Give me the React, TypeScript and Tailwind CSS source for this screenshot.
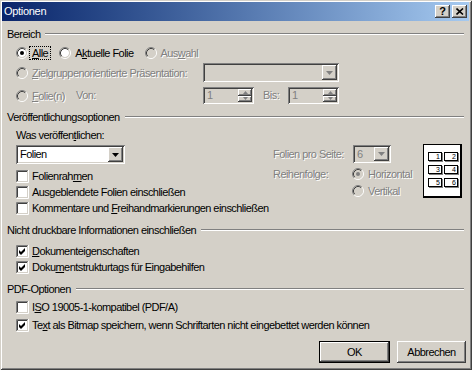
import React from "react";

const sunken =
  "shadow-[inset_1px_1px_0_#808080,inset_-1px_-1px_0_#ffffff,inset_2px_2px_0_#404040,inset_-2px_-2px_0_#d4d0c8]";
const raised =
  "shadow-[inset_-1px_-1px_0_#404040,inset_1px_1px_0_#ffffff,inset_-2px_-2px_0_#808080,inset_2px_2px_0_#d4d0c8]";
const dis = "text-[#808080] [text-shadow:1px_1px_0_#ffffff]";

function Radio({ checked, disabled }: { checked?: boolean; disabled?: boolean }) {
  return (
    <svg width="12" height="12" viewBox="0 0 12 12" className="shrink-0">
      <circle cx="6" cy="6" r="4" fill={disabled ? "#d4d0c8" : "#ffffff"} />
      <path d="M2.11 9.89 A5.5 5.5 0 0 1 9.89 2.11" stroke="#808080" fill="none" />
      <path d="M9.89 2.11 A5.5 5.5 0 0 1 2.11 9.89" stroke="#ffffff" fill="none" />
      <path d="M2.82 9.18 A4.5 4.5 0 0 1 9.18 2.82" stroke="#404040" fill="none" />
      <path d="M9.18 2.82 A4.5 4.5 0 0 1 2.82 9.18" stroke="#d4d0c8" fill="none" />
      {checked && <circle cx="6" cy="6" r="2" fill={disabled ? "#808080" : "#000000"} />}
    </svg>
  );
}

function Check({ checked }: { checked?: boolean }) {
  return (
    <svg width="13" height="13" viewBox="0 0 13 13" className="shrink-0">
      <rect x="2" y="2" width="9" height="9" fill="#ffffff" />
      <path d="M0.5 12 V0.5 H12" stroke="#808080" fill="none" />
      <path d="M0.5 12.5 H12.5 V0" stroke="#ffffff" fill="none" />
      <path d="M1.5 11 V1.5 H11" stroke="#404040" fill="none" />
      <path d="M1.5 11.5 H11.5 V1" stroke="#d4d0c8" fill="none" />
      {checked && <path d="M3 5 l2 2 l4 -4 v3 l-4 4 l-2 -2 z" fill="#000000" />}
    </svg>
  );
}

function RadioItem({
  checked,
  disabled,
  focus,
  children,
}: {
  checked?: boolean;
  disabled?: boolean;
  focus?: boolean;
  children: React.ReactNode;
}) {
  return (
    <div className="flex items-center h-[14px]">
      <Radio checked={checked} disabled={disabled} />
      <span
        className={`ml-[1px] px-[2px] border border-dotted leading-[12px] whitespace-nowrap ${
          focus ? "border-black" : "border-transparent"
        } ${disabled ? dis : ""}`}
      >
        {children}
      </span>
    </div>
  );
}

function CheckItem({ checked, children }: { checked?: boolean; children: React.ReactNode }) {
  return (
    <div className="flex items-center h-[16px] pl-[14px]">
      <Check checked={checked} />
      <span className="ml-[3px] whitespace-nowrap">{children}</span>
    </div>
  );
}

function Section({ title }: { title: string }) {
  return (
    <div className="flex items-center h-[14px] pl-[5px] pr-[5px]">
      <span className="whitespace-nowrap">{title}</span>
      <div className="flex-1 ml-[5px] h-[2px] border-t border-t-[#808080] border-b border-b-white" />
    </div>
  );
}

function Arrow({ disabled, small }: { disabled?: boolean; small?: boolean }) {
  return small ? (
    <svg width="5" height="3" viewBox="0 0 5 3">
      <path d="M0 0 H5 L2.5 3 Z" fill={disabled ? "#808080" : "#000"} />
    </svg>
  ) : (
    <svg width="7" height="4" viewBox="0 0 7 4">
      <path d="M0 0 H7 L3.5 4 Z" fill={disabled ? "#808080" : "#000"} />
    </svg>
  );
}

function Combo({
  className,
  value,
  disabled,
}: {
  className: string;
  value?: string;
  disabled?: boolean;
}) {
  return (
    <div className={`flex p-[2px] ${sunken} ${className}`}>
      <div
        className={`flex-1 flex items-center pl-[2px] ${
          disabled ? "bg-[#d4d0c8] text-[#808080]" : "bg-white text-black"
        }`}
      >
        {value}
      </div>
      <div className={`w-[15px] flex items-center justify-center bg-[#d4d0c8] ${raised}`}>
        <Arrow disabled={disabled} />
      </div>
    </div>
  );
}

function Spin({ className }: { className: string }) {
  return (
    <div className={`flex p-[2px] ${sunken} ${className}`}>
      <div className="flex-1 flex items-center pl-[2px] bg-[#d4d0c8] text-[#808080]">1</div>
      <div className="w-[14px] flex flex-col">
        <div className={`flex-1 flex items-center justify-center ${raised}`}>
          <svg width="5" height="3" viewBox="0 0 5 3">
            <path d="M0 3 H5 L2.5 0 Z" fill="#808080" />
          </svg>
        </div>
        <div className={`flex-1 flex items-center justify-center ${raised}`}>
          <Arrow disabled small />
        </div>
      </div>
    </div>
  );
}

function Cell({ n }: { n: number }) {
  return (
    <div className="w-[14px] h-[9px] border border-black bg-white shadow-[1px_1px_0_#808080] flex items-center justify-end pr-[1px] text-[7px] leading-none">
      {n}
    </div>
  );
}

export default function App() {
  return (
    <div className="w-[472px] h-[370px] bg-[#d4d0c8] flex flex-col pl-[2px] pt-[2px] pr-[3px] pb-[3px] shadow-[inset_1px_1px_0_#d4d0c8,inset_-1px_-1px_0_#404040,inset_2px_2px_0_#ffffff,inset_-2px_-2px_0_#808080] font-['Liberation_Sans',Arial,sans-serif] text-[11px] tracking-[-0.55px] text-black leading-[13px]">
      {/* Title bar */}
      <div className="h-[19px] flex items-center bg-gradient-to-r from-[#0a246a] to-[#a6caf0] pl-[2px] pr-[2px]">
        <span className="text-white text-[11px] tracking-[-0.3px] flex-1">Optionen</span>
        <div className={`w-[15px] h-[13px] flex items-center justify-center bg-[#d4d0c8] ${raised} font-bold text-[11px] leading-none tracking-normal`}>
          ?
        </div>
        <div className={`ml-[2px] w-[15px] h-[13px] flex items-center justify-center bg-[#d4d0c8] ${raised}`}>
          <svg width="8" height="7" viewBox="0 0 8 7">
            <path d="M0.5 0.5 L7 6.5 M7 0.5 L0.5 6.5" stroke="#000" strokeWidth="1.6" />
          </svg>
        </div>
      </div>

      {/* Bereich */}
      <div className="mt-[6px]">
        <Section title="Bereich" />
      </div>
      <div className="mt-[5px] h-[14px] pl-[14px] flex items-center gap-[8px]">
        <RadioItem checked focus>
          <u>A</u>lle
        </RadioItem>
        <RadioItem>
          A<u>k</u>tuelle Folie
        </RadioItem>
        <RadioItem disabled>
          Aus<u>w</u>ahl
        </RadioItem>
      </div>
      <div className="mt-[3px] h-[19px] pl-[14px] flex items-center">
        <div className="w-[187px]">
          <RadioItem disabled>
            <u>Z</u>ielgruppenorientierte Präsentation:
          </RadioItem>
        </div>
        <Combo className="w-[136px] h-[19px]" disabled />
      </div>
      <div className="mt-[5px] h-[17px] pl-[14px] flex items-center">
        <div className="w-[60px]">
          <RadioItem disabled>
            <u>F</u>olie(n)
          </RadioItem>
        </div>
        <div className={`w-[127px] ${dis}`}>Von:</div>
        <Spin className="w-[51px] h-[17px]" />
        <div className={`ml-[9px] w-[25px] ${dis}`}>Bis:</div>
        <Spin className="w-[51px] h-[17px]" />
      </div>

      {/* Veröffentlichungsoptionen */}
      <div className="mt-[6px]">
        <Section title="Veröffentlichungsoptionen" />
      </div>
      <div className="mt-[4px] h-[72px] flex">
        <div className="w-[271px] flex flex-col">
          <div className="h-[14px] pl-[14px] flex items-center">
            Was veröffen<u>t</u>lichen:
          </div>
          <div className="mt-[3px] pl-[14px]">
            <Combo className="w-[109px] h-[19px]" value="Folien" />
          </div>
          <div className="mt-[4px]">
            <CheckItem>
              Folienrah<u>m</u>en
            </CheckItem>
          </div>
          <CheckItem>
            Aus<u>g</u>eblendete Folien einschließen
          </CheckItem>
        </div>
        <div className="flex pt-[16px]">
          <div className="w-[150px] mt-[1px] flex flex-col">
            <div className="h-[18px] flex items-center">
              <div className={`w-[80px] ${dis}`}>Folien pro Seite:</div>
              <Combo className="w-[38px] h-[18px]" value="6" disabled />
            </div>
            <div className="mt-[4px] h-[14px] flex items-center">
              <div className={`w-[79px] ${dis}`}>Reihenfolge:</div>
              <RadioItem checked disabled>
                Horizontal
              </RadioItem>
            </div>
            <div className="mt-[3px] h-[14px] flex items-center pl-[79px]">
              <RadioItem disabled>Vertikal</RadioItem>
            </div>
          </div>
          <div className="w-[39px] h-[54px] bg-white border border-black border-r-2 border-b-2 pl-[4px] pt-[7px] grid grid-cols-[14px_14px] gap-x-[2px] gap-y-[4px] content-start tracking-normal">
            <Cell n={1} />
            <Cell n={2} />
            <Cell n={3} />
            <Cell n={4} />
            <Cell n={5} />
            <Cell n={6} />
          </div>
        </div>
      </div>
      <CheckItem>
        Kommentare und <u>F</u>reihandmarkierungen einschließen
      </CheckItem>

      {/* Nicht druckbare Informationen */}
      <div className="mt-[7px]">
        <Section title="Nicht druckbare Informationen einschließen" />
      </div>
      <div className="mt-[6px]">
        <CheckItem checked>
          <u>D</u>okumenteigenschaften
        </CheckItem>
      </div>
      <CheckItem checked>
        Doku<u>m</u>entstrukturtags für Eingabehilfen
      </CheckItem>

      {/* PDF-Optionen */}
      <div className="mt-[7px]">
        <Section title="PDF-Optionen" />
      </div>
      <div className="mt-[3px]">
        <CheckItem>
          I<u>S</u>O 19005-1-kompatibel (PDF/A)
        </CheckItem>
      </div>
      <div className="mt-[2px]">
        <CheckItem checked>
          Te<u>x</u>t als Bitmap speichern, wenn Schriftarten nicht eingebettet werden können
        </CheckItem>
      </div>

      {/* Buttons */}
      <div className="mt-[8px] flex justify-end pr-[3px] gap-[7px]">
        <div className="w-[71px] h-[22px] border border-black">
          <div className={`w-full h-full flex items-center justify-center ${raised}`}>OK</div>
        </div>
        <div className={`w-[69px] h-[22px] flex items-center justify-center ${raised}`}>
          Abbrechen
        </div>
      </div>
    </div>
  );
}
